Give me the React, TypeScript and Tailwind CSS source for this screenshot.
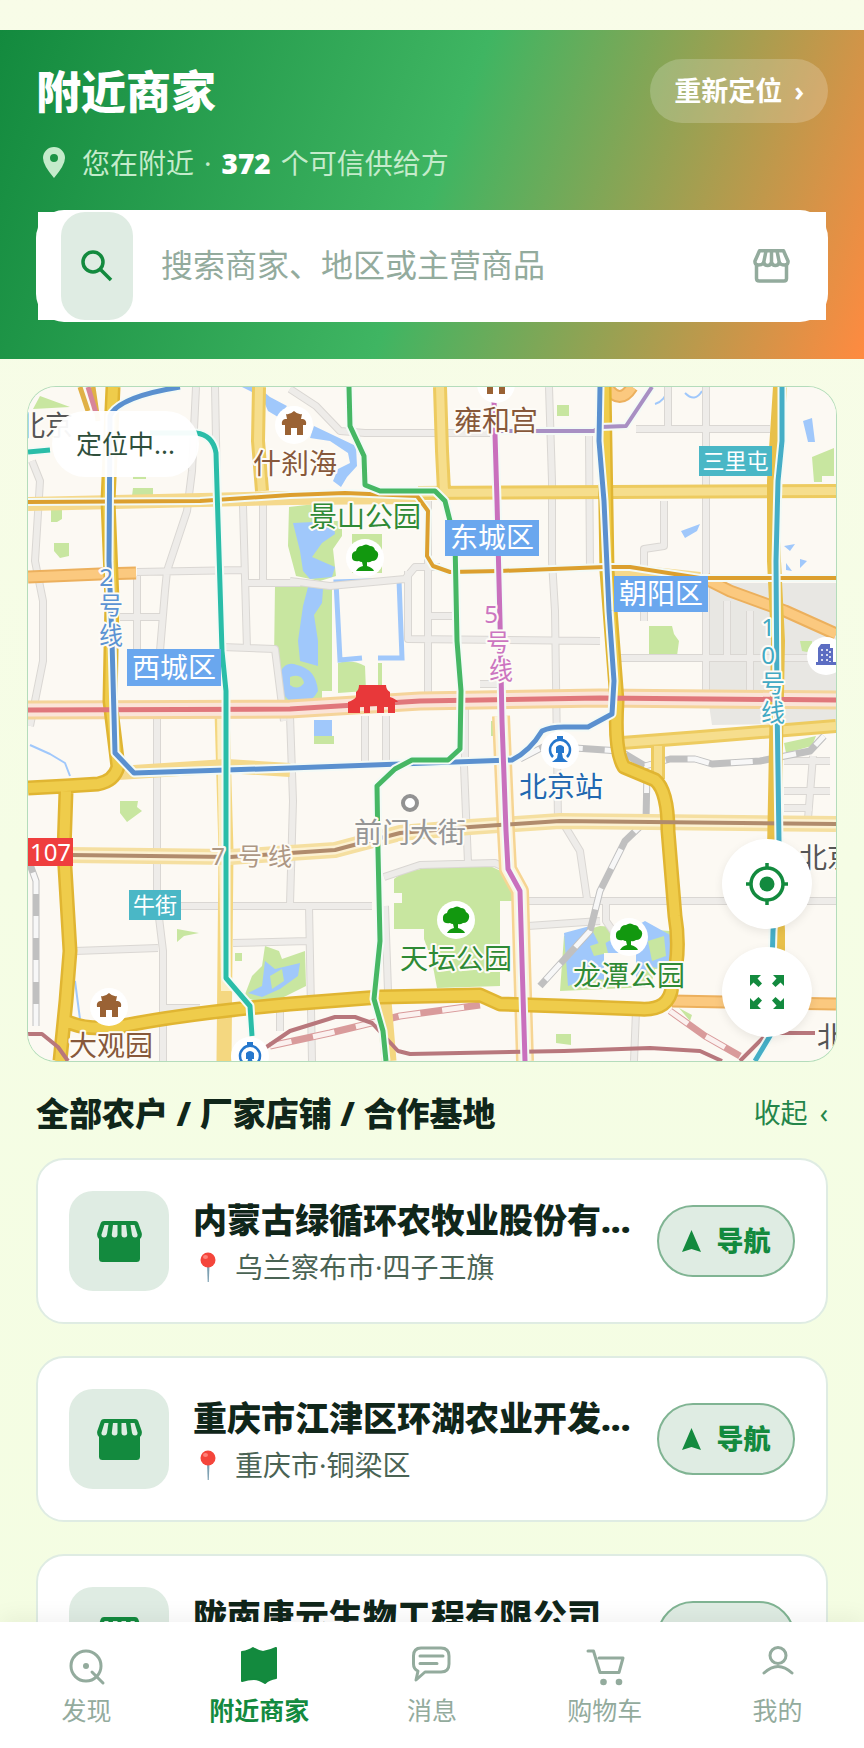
import React from 'react';

const shops = [
  { name: '内蒙古绿循环农牧业股份有...', area: '乌兰察布市·四子王旗' },
  { name: '重庆市江津区环湖农业开发...', area: '重庆市·铜梁区' },
  { name: '陇南唐元生物工程有限公司', area: '陇南市·武都区' },
];

const StoreOutline: React.FC = () => (
  <svg viewBox="0 0 37 34" className="h-[34px] w-[37px]" fill="none" stroke="#93ab9d" strokeWidth="3.500" strokeLinejoin="round" strokeLinecap="round" aria-hidden="true">
    <path d="M6.500 1.800H30.500L35 12Q35.500 16 31.500 16Q27.500 16 26.300 13.500Q25.500 16.500 22.300 16.500Q19.500 16.500 18.500 13.500Q17.500 16.500 14.700 16.500Q11.500 16.500 10.700 13.500Q9.500 16 5.500 16Q1.500 16 2 12Z" />
    <path d="M13 2L10.700 13.500M18.500 2V13.500M24 2L26.300 13.500M3.500 17V29.500Q3.500 32 6.300 32H31Q33.500 32 33.500 29.500V17" />
  </svg>
);

const StoreFilled: React.FC = () => (
  <svg viewBox="0 0 45 41" className="h-[41px] w-[45px]" aria-hidden="true">
    <path fill="#138a3e" d="M7 0H38Q40.5 0 41.2 2L44.7 12Q45.5 16 43 18V37.500Q43 41 39.500 41H5.500Q2 41 2 37.500V18Q-.5 16 .3 12L3.800 2Q4.500 0 7 0Z" />
    <g fill="#dfede3">
      <path d="M7.500 4H11.500L10 14Q9.500 16.500 7 16.500Q4 16.500 4.500 13.500Z" />
      <path d="M16 4H20.500V13.500Q20.500 16.500 17.700 16.500Q14.500 16.500 14.800 13.500Z" />
      <path d="M24.500 4H29L30.200 13.500Q30.500 16.500 27.300 16.500Q24.500 16.500 24.500 13.500Z" />
      <path d="M33.500 4H37.500L40.500 13.500Q41 16.500 38 16.500Q35.500 16.500 35 14Z" />
    </g>
  </svg>
);

const PushPin: React.FC = () => (
  <svg viewBox="0 0 30 32" className="h-8 w-[30px]" aria-hidden="true">
    <path d="M14 14H16.500L15.800 31H14.700Z" fill="#7ea1b3" />
    <circle cx="15" cy="9" r="7.500" fill="#f4453b" />
    <ellipse cx="12.500" cy="6" rx="2.500" ry="2" fill="#ff8279" />
  </svg>
);

// white disc with a small symbol, centred at x/y
const Poi: React.FC<{ x: number; y: number; kind: 'tree' | 'temple' | 'station' | 'office' }> = ({ x, y, kind }) => (
  <g transform={`translate(${x} ${y})`}>
    <circle r="19" fill="#fff" />
    {kind === 'tree' && (
      <path fill="#12980f" d="M-13 0Q-14-6-9-7Q-8-12-3-12Q1-15 5-12Q9-12 10-8Q14-6 13-2Q12 3 7 3Q4 5 2 4V8Q8 10 9 13H-9Q-7 9-2 8L-3 4Q-5 4-6 3Q-12 4-13 0Z" />
    )}
    {kind === 'temple' && (
      <path fill="#9a6234" d="M-8-11Q-4-10 0-14Q4-10 8-11L7-6H9Q13-5 12 0H9V10H3V3H-3V10H-9V0H-12Q-13-5-9-6H-7Z" />
    )}
    {kind === 'station' && (
      <g>
        <path d="M-7 7A10 10 0 1 1 7 7" fill="none" stroke="#2577cd" strokeWidth="2.500" />
        <path fill="#2577cd" d="M-3-14H3V-10H-3ZM-4-3Q0-7 4-3V3H2L3 8L8 12H-8L-3 8L-2 3H-4Z" />
      </g>
    )}
    {kind === 'office' && (
      <g>
        <path fill="#5c6dc2" d="M-5-12H4V-8H7V6H10V9H-10V6H-8V-8Z" />
        <path stroke="#fff" strokeWidth="1.500" strokeDasharray="2 3" d="M-4-7V6M1-7V6M4-5V6" />
      </g>
    )}
  </g>
);

const minorRoads = [
  'M196 386L192 470L187 510L167 570L165 590L160 650',
  'M137 571L243 569M137 575V655M120 616H165M215 386L217 490M243 505L247 648M263 500V580M248 582H300M222 646L275 648L284 720',
  'M32 460L40 480L35 560L43 600L43 660L35 700L30 725',
  'M290 388L316 405L340 430L365 432H490M549 386L552 480L552 560L555 610L558 820M589 435L590 570',
  'M408 570V638L600 640M428 500V700M290 580L330 585L405 578L415 566L440 566M430 615H455',
  'M706 386V690M668 386V428M636 428H770M664 500V545L644 548V620M615 657H836M727 600V660M750 610V690',
  'M157 715V900L163 950V1060M290 715L293 800L290 903M160 905H372M75 950L158 947M233 942L308 940M163 1007H200M280 1010V1030',
  'M309 905L312 1060M385 905L388 990M384 876L420 864L495 862L508 868M464 765L468 862',
  'M527 900H836M528 925L600 920M563 822L580 850L587 898M606 900V920L620 940M636 1010L634 1060',
  'M813 755L808 818M784 790H830M784 807H812M784 760H830M365 715V760M386 715V760M465 690V765M480 683H500',
];

const parks = [
  'M33 408L40 395L70 406Z',
  'M51 508H62V518L57 521H51ZM54 542H69V555L60 557L54 550ZM133 487H153V495H132ZM133 475H146V478H133Z',
  'M289 506L315 503L318 520H342V535L333 548L336 575L320 580L296 575L288 545Z',
  'M275 584H332V690H322V702H285L274 660ZM338 662Q352 658 365 665L366 690L338 692Z',
  'M352 533H382V572H352ZM378 662H382V692H378Z',
  'M649 625H672L674 633L679 640L677 655H649ZM812 456L834 447V475H822V481H814Z',
  'M800 640H812V652L802 650ZM120 800H138L137 806L142 810L127 821L120 812Z',
  'M177 928L199 932L184 935L177 941ZM235 952H242V960H235Z',
  'M244 996L252 975L262 965L265 945L279 950L282 958L305 950L306 985L280 998L256 1000Z',
  'M402 872L430 866L490 865L505 872L514 900H500V985L437 987L432 960L424 938V928H394V902H402V892H394V878Z',
  'M564 935L600 925L670 930L672 985L560 990ZM556 1033H571V1044L556 1042Z',
  'M784 742L816 735L812 745L786 752ZM491 720H498V735H491ZM314 735H334V743H314ZM679 1007L692 1014L690 1020Z',
  'M557 404H569V415H557Z',
];

const water = [
  'M242 386H258L270 396L287 405L278 416L268 410L262 396Z',
  'M314 425L356 445L357 465L347 476L341 486L333 480L338 468L350 462L348 452L330 440L310 437Z',
  'M293 522L333 520L335 533L322 542L312 556L335 566L332 576L310 578L303 570L300 550Z',
  'M308 586L323 588L322 602L314 614L318 640V665L300 660L298 640L303 605Z',
  'M281 670Q286 660 297 664Q316 668 318 690Q310 706 292 701Q278 694 281 670Z',
  'M803 420L812 417L815 441H808ZM681 530L700 523L697 530L685 537ZM784 545L795 543L790 550ZM800 558L807 560L800 567ZM786 562L792 570L786 569Z',
  'M248 992L262 985L265 960L275 968L300 962L298 975L280 988L262 996Z',
  'M564 932L590 925L600 945L645 920L672 935L670 970L648 965L640 980L590 978L568 985Z',
  'M314 719H332V735H314Z',
];

const ring =
  'M28 787L66 785L98 783Q114 780 118 766L110 700L112 600L108 500L113 386M66 790L64 850L70 950L66 1000L60 1060M62 1018Q82 1030 118 1026Q180 1013 290 1003L380 996L480 994L500 1003L560 1005L640 1008Q670 1010 672 985Q681 950 675 915L668 830Q668 790 655 779L624 766Q614 750 617 700L607 570L604 386';

const railway =
  'M36 1025V880L28 858M520 758L545 745L620 750L645 765L670 758H695L712 763L760 760L810 750L824 735M647 770L646 820L625 840L600 890L590 930L540 985';
const lineTwo =
  'M180 386Q118 396 110 415L109 560L112 640L115 752L134 772L290 767L512 759Q530 750 542 730Q550 726 564 726H588L612 713L614 680L609 610L604 500L599 440L600 386';
const lineFive = 'M494 400L497 500L500 620L502 720L506 830L508 868L520 890L522 960L525 1060';
const lineTen = 'M782 386V440L778 480L776 560L777 700L779 840L773 930L770 1035L755 1060';
const lineSix = 'M28 501L200 500L290 494L345 492L417 495L428 510L427 555L433 565L450 571L500 570L605 566H630L700 577H836';
const lineSeven = 'M70 854L230 856L290 852L335 849L350 845L400 832L470 826L560 820L836 823';
const redLine = 'M28 709L290 708L420 700L600 697L836 699';
const tealLine = 'M28 451L50 449M150 432H196Q213 434 216 452L218 520L222 650L226 690V977L250 1005L252 1035';
const greenLine =
  'M349 386L350 425L364 455L365 484L380 490H435L445 500L455 540L457 640L461 690L460 748L448 759H412L395 768L377 785L378 850L380 940L374 998L383 1030L386 1060';

// metro line with its pale casing
const Metro: React.FC<{ d: string; color: string; width?: number }> = ({ d, color, width = 5 }) => (
  <>
    <path d={d} stroke="#f3faf6" strokeWidth={width + 4} />
    <path d={d} stroke={color} strokeWidth={width} />
  </>
);

const districts = [
  { text: '西城区', x: 127, y: 648, w: 94, h: 37, fill: '#6aa7ee', size: 28 },
  { text: '东城区', x: 445, y: 519, w: 94, h: 36, fill: '#6aa7ee', size: 28 },
  { text: '朝阳区', x: 614, y: 575, w: 94, h: 36, fill: '#6aa7ee', size: 28 },
  { text: '三里屯', x: 699, y: 445, w: 73, h: 30, fill: '#4ab7c6', size: 22 },
  { text: '牛街', x: 129, y: 889, w: 52, h: 30, fill: '#4ab7c6', size: 22 },
  { text: '107', x: 28, y: 837, w: 45, h: 28, fill: '#ef3e3e', size: 24 },
];

const places = [
  { text: '什刹海', x: 295, y: 473, fill: '#87583a' },
  { text: '雍和宫', x: 496, y: 430, fill: '#87583a' },
  { text: '大观园', x: 111, y: 1055, fill: '#87583a' },
  { text: '景山公园', x: 365, y: 526, fill: '#2f8a35' },
  { text: '天坛公园', x: 456, y: 968, fill: '#2f8a35' },
  { text: '龙潭公园', x: 629, y: 985, fill: '#2f8a35' },
  { text: '前门大街', x: 410, y: 842, fill: '#969696' },
  { text: '北京站', x: 561, y: 796, fill: '#2268b0' },
  { text: '北京', x: 827, y: 867, fill: '#555555' },
  { text: '北京', x: 45, y: 435, fill: '#555555' },
  { text: '北', x: 831, y: 1046, fill: '#555555' },
];

const lineNames = [
  { chars: ['2', '号', '线'], pos: [[106, 585], [111, 613], [111, 643]], fill: '#5b93d3' },
  { chars: ['5', '号', '线'], pos: [[491, 622], [498, 650], [501, 678]], fill: '#cc75c0' },
  { chars: ['1', '0', '号', '线'], pos: [[768, 635], [768, 663], [773, 691], [773, 720]], fill: '#41a9c4' },
  { chars: ['7', '号', '线'], pos: [[218, 864], [250, 864], [280, 864]], fill: '#ad9784' },
];

const CityMap: React.FC = () => (
  <svg viewBox="28 386 808 674" className="block h-auto w-full" role="img" aria-label="附近商家地图">
    <rect x="28" y="386" width="808" height="674" fill="#fcf9f3" />
    <path d="M707 582L836 582V722L712 724L707 690Z" fill="#e8e7e3" />
    <path d={parks.join('')} fill="#c8e6a0" />
    <path d={water.join('')} fill="#a0c8fb" />
    <path d="M290 676Q302 672 304 682Q298 690 290 684ZM270 975L282 968L284 980L272 988ZM590 945L605 940L608 952L594 955ZM648 940L664 935L666 955L652 960Z" fill="#c8e6a0" />
    <path d="M604 952H636V985H604ZM655 968H672V988H650Z" fill="#fcf9f3" />
    <g fill="none" strokeLinejoin="round">
      <path d="M362 657L340 659L336 581L399 579L402 657H378" stroke="#a0c8fb" strokeWidth="5" strokeLinejoin="miter" />
      <path d="M30 744L50 753L65 762L70 775M655 403Q665 400 668 388M685 392Q695 402 702 390M75 980L80 1018" stroke="#a0c8fb" strokeWidth="2" />
      <path d={minorRoads.join('')} stroke="#dad7d3" strokeWidth="8" />
      <path d={minorRoads.join('')} stroke="#eeece9" strokeWidth="6" />

      <path d={railway} stroke="#c0c0c0" strokeWidth="7" />
      <path d={railway} stroke="#f7f7f7" strokeWidth="5" strokeDasharray="22 22" />
      <path d="M270 1045L330 1032L400 1015L480 1004M670 1010L705 1035L740 1055" stroke="#d99b9b" strokeWidth="7" />
      <path d="M270 1045L330 1032L400 1015L480 1004M670 1010L705 1035L740 1055" stroke="#fbf1ef" strokeWidth="5" strokeDasharray="22 22" />

      <path d="M222 710L226 850L224 1060M384 1000L389 1060" stroke="#f4d780" strokeWidth="15" />
      <path d="M222 710L226 990" stroke="#fbf0c8" strokeWidth="10" />
      <path d="M28 576L100 573L136 572M836 1003L672 1000M706 578L730 590L785 610L836 633M607 386Q620 405 632 386" stroke="#ecb05d" strokeWidth="13" />
      <path d="M28 576L100 573L136 572M836 1003L672 1000M706 578L730 590L785 610L836 633M607 386Q620 405 632 386" stroke="#fbc97f" strokeWidth="9" />
      <path d="M259 386L258 440L262 490M440 386L442 450L444 490M418 492L836 490M622 742L700 736L836 725M658 745V778" stroke="#edcb60" strokeWidth="14" />
      <path d="M259 386L258 440L262 490M440 386L442 450L444 490M418 492L836 490M622 742L700 736L836 725M658 745V778" stroke="#f6de8d" strokeWidth="8" />
      <path d="M28 503L290 497L420 496M118 772L226 765L290 769M605 568L700 578" stroke="#f5d98c" strokeWidth="14" />
      <path d={lineSeven} stroke="#f5dfa0" strokeWidth="16" />
      <path d={lineSeven} stroke="#fcf1d2" strokeWidth="9" />
      <path d="M501 715L506 830L508 868L520 890L522 960L525 1060" stroke="#f6d593" strokeWidth="18" />
      <path d="M501 715L506 830L508 868L520 890L522 960L525 1060" stroke="#fdf3dc" strokeWidth="13" />
      <path d={redLine} stroke="#f5d49a" strokeWidth="19" />
      <path d={redLine} stroke="#fbe4d8" strokeWidth="13" />
      <path d="M780 386L774 480L774 560L778 640L774 850L778 930V960" stroke="#e8c04a" strokeWidth="14" />
      <path d={ring} stroke="#e0b532" strokeWidth="15" />
      <path d={ring} stroke="#efcc4b" strokeWidth="10" />
      <path d="M80 386L88 410M93 386L98 420" stroke="#e0b045" strokeWidth="5" />
      <path d="M88 386L96 412" stroke="#d7849a" strokeWidth="5" />

      <path d="M28 1033H42L58 1046L68 1060M265 1047L290 1030L335 1016H355L372 1022L398 1050L410 1053L564 1050L650 1047L700 1050L722 1060M740 1060L765 1035L777 1032H815" stroke="#b8777c" strokeWidth="4" />
      <path d={redLine} stroke="#e0777b" strokeWidth="5" />
      <path d={lineSeven} stroke="#b08b6c" strokeWidth="4" />
      <Metro d={lineSix} color="#dc9f2e" width={4} />
      <Metro d="M490 430H594L600 426L626 425L652 386" color="#a88fc3" width={4} />
      <Metro d={lineTwo} color="#5a90cf" />
      <Metro d={lineTen} color="#45aec6" />
      <Metro d={lineFive} color="#c970bd" />
      <Metro d={greenLine} color="#46b764" />
      <Metro d={tealLine} color="#2abda8" />
      <circle cx="410" cy="802" r="7" fill="#fff" stroke="#929292" strokeWidth="4" />
    </g>

    <path fill="#e8383a" d="M356 691Q359 689 359 684H386Q386 689 390 691V696Q396 698 398 701H395V712H388V706H384V712H377V705H370V712H364V706H360V712H348V701Q354 699 356 696Z" />

    <Poi x={294} y={424} kind="temple" />
    <Poi x={496} y={383} kind="temple" />
    <Poi x={109} y={1006} kind="temple" />
    <Poi x={365} y={557} kind="tree" />
    <Poi x={456} y={919} kind="tree" />
    <Poi x={629} y={936} kind="tree" />
    <Poi x={560} y={749} kind="station" />
    <Poi x={250} y={1055} kind="station" />
    <Poi x={826} y={655} kind="office" />

    <g textAnchor="middle">
      {places.map((p) => (
        <text key={`${p.text}-${p.x}`} x={p.x} y={p.y} fill={p.fill} fontSize="28" stroke="#fdfbf6" strokeWidth="4" strokeLinejoin="round" paintOrder="stroke">
          {p.text}
        </text>
      ))}
      {lineNames.map((line) =>
        line.chars.map((c, i) => (
          <text key={`${line.fill}-${i}`} x={line.pos[i][0]} y={line.pos[i][1]} fill={line.fill} fontSize="24" stroke="#fdfbf6" strokeWidth="4" strokeLinejoin="round" paintOrder="stroke">
            {c}
          </text>
        )),
      )}
      {districts.map((d) => (
        <g key={d.text}>
          <rect x={d.x} y={d.y} width={d.w} height={d.h} fill={d.fill} />
          <text x={d.x + d.w / 2} y={d.y + d.h / 2 + d.size * 0.36} fill="#fff" fontSize={d.size}>
            {d.text}
          </text>
        </g>
      ))}
    </g>
  </svg>
);

const tabs = [
  {
    label: '发现',
    icon: (
      <>
        <circle cx="20" cy="22" r="15" />
        <path d="M26 28L37 39" />
        <circle cx="20" cy="22" r="3" fill="currentColor" stroke="none" />
      </>
    ),
  },
  {
    label: '附近商家',
    active: true,
    icon: <path d="M3 8Q10 7 14 4Q19 7 24 8Q31 7 37 4V34Q30 35 26 39Q20 35 15 35Q9 35 3 37Z" fill="currentColor" strokeWidth="2" />,
  },
  {
    label: '消息',
    icon: (
      <>
        <path d="M9 4H29Q37 4 37 12V20Q37 28 29 28H13L4 36L6 27Q1.500 25 1.500 20V12Q1.500 4 9 4Z" />
        <path d="M8 12H31M8 19.500H25" />
      </>
    ),
  },
  {
    label: '购物车',
    icon: (
      <>
        <path d="M3 7H8.500L15 28.500H34L38 14H14" />
        <circle cx="18.500" cy="38" r="3.300" fill="currentColor" stroke="none" />
        <circle cx="34" cy="38" r="3.300" fill="currentColor" stroke="none" />
      </>
    ),
  },
  {
    label: '我的',
    icon: (
      <>
        <circle cx="20" cy="11.500" r="8" />
        <path d="M6 29Q20 16 34 29" />
      </>
    ),
  },
];

const App: React.FC = () => {
  return (
    <div className="flex h-screen flex-col bg-gradient-to-b from-[#f8fce8] via-[#f5fde5] to-[#f4fde2] font-['Noto_Sans','Noto_Sans_CJK_SC',sans-serif] text-[#10261a]">
      <main className="min-h-0 flex-1 overflow-y-auto pt-[30px] [scrollbar-width:none]">
        <header className="bg-[linear-gradient(110deg,#138a3e_0%,#3fb562_50%,#ff8a40_100%)] px-9 pt-[29px] pb-[37px] text-white">
          <div className="flex h-16 items-center justify-between">
            <h1 className="text-[45px] leading-none font-black">附近商家</h1>
            <button type="button" className="flex h-16 items-center gap-3 rounded-full bg-white/20 px-6 text-[27px] font-bold">
              重新定位 <span>›</span>
            </button>
          </div>
          <p className="mt-5 flex h-10 items-center gap-[10px] text-[28px] text-[#c4ebcb]">
            <svg viewBox="0 0 36 40" className="h-10 w-9" fill="currentColor" aria-hidden="true">
              <path fillRule="evenodd" d="M18 4A11 11 0 0 1 29 15Q29 22 18 35Q7 22 7 15A11 11 0 0 1 18 4ZM18 11A4 4 0 1 0 18 19A4 4 0 1 0 18 11Z" />
            </svg>
            <span>您在附近</span>
            <span>·</span>
            <strong className="font-black text-white">372</strong>
            <span>个可信供给方</span>
          </p>
          <form className="mt-[27px] h-28 rounded-[28px] bg-white p-[2px]">
            <div className="flex h-full items-center bg-white pr-9 pl-[23px]">
              <button type="submit" aria-label="搜索" className="flex h-full w-[72px] shrink-0 items-center justify-center rounded-[24px] bg-[#dfece3]">
                <svg viewBox="0 0 32 32" className="h-8 w-8" fill="none" stroke="#138a3e" strokeWidth="3.500" aria-hidden="true">
                  <circle cx="12" cy="12" r="10" />
                  <path d="M19 19L30 30" />
                </svg>
              </button>
              <input
                type="text"
                aria-label="搜索商家"
                placeholder="搜索商家、地区或主营商品"
                className="ml-7 h-16 min-w-0 flex-1 bg-transparent pb-1 text-[32px] text-[#10261a] outline-none placeholder:text-[#93ab9d]"
              />
              <StoreOutline />
            </div>
          </form>
        </header>

        <section className="relative mx-7 mt-7 overflow-hidden rounded-[28px] ring-1 ring-[#b4dcbb]">
          <CityMap />
          <div className="absolute top-6 left-6 flex h-[66px] items-center rounded-full bg-white/95 px-6 text-[26px] text-[#2f4f3c]">定位中...</div>
          <div className="absolute right-6 bottom-6 flex flex-col gap-[18px]">
            <button type="button" aria-label="定位" className="flex h-[90px] w-[90px] items-center justify-center rounded-full bg-white shadow-[0_3px_10px_rgba(0,0,0,0.08)]">
              <svg viewBox="0 0 42 42" className="h-[42px] w-[42px]" fill="none" stroke="#138a3e" strokeWidth="3.500" aria-hidden="true">
                <circle cx="21" cy="21" r="16" />
                <circle cx="21" cy="21" r="7.500" fill="#138a3e" stroke="none" />
                <path d="M21 0V6M21 36V42M0 21H6M36 21H42" />
              </svg>
            </button>
            <button type="button" aria-label="全屏" className="flex h-[90px] w-[90px] items-center justify-center rounded-full bg-white shadow-[0_3px_10px_rgba(0,0,0,0.08)]">
              <svg viewBox="0 0 34 34" className="h-[34px] w-[34px]" fill="#138a3e" aria-hidden="true">
                <path d="M0 0H11L7.500 3.500L12 8.500L8.500 12L3.500 7.500L0 11Z" />
                <path d="M34 0H23L26.500 3.500L22 8.500L25.500 12L30.500 7.500L34 11Z" />
                <path d="M0 34H11L7.500 30.500L12 25.500L8.500 22L3.500 26.500L0 23Z" />
                <path d="M34 34H23L26.500 30.500L22 25.500L25.500 22L30.500 26.500L34 23Z" />
              </svg>
            </button>
          </div>
        </section>

        <div className="mx-9 mt-7 flex h-12 items-center justify-between">
          <h2 className="text-[33px] leading-none font-black">全部农户 / 厂家店铺 / 合作基地</h2>
          <button type="button" className="flex items-center gap-3 text-[27px] text-[#24854a]">
            收起 <span>‹</span>
          </button>
        </div>

        <ul className="mx-9 mt-[21px] flex flex-col gap-8 pb-8">
          {shops.map((shop) => (
            <li key={shop.name} className="flex items-center rounded-[28px] border-2 border-[#dfece3] bg-white p-[31px]">
              <div className="flex h-[100px] w-[100px] shrink-0 items-center justify-center rounded-[24px] bg-[#dfece3]">
                <StoreFilled />
              </div>
              <div className="ml-6 min-w-0 flex-1">
                <h3 className="truncate text-[34px] leading-[52px] font-black">{shop.name}</h3>
                <p className="flex items-center gap-3 text-[28px] leading-[42px] text-[#4a6354]">
                  <PushPin />
                  {shop.area}
                </p>
              </div>
              <button type="button" className="ml-5 flex h-[72px] w-[138px] shrink-0 items-center justify-center gap-4 rounded-full border-2 border-[#80b493] bg-[#dfece3] text-[27px] font-black text-[#138a3e]">
                <svg viewBox="0 0 19 23" className="h-[23px] w-[19px]" fill="currentColor" aria-hidden="true">
                  <path d="M9.500 0L19 22L9.500 19L0 22Z" />
                </svg>
                导航
              </button>
            </li>
          ))}
        </ul>
      </main>

      <nav className="relative grid shrink-0 grid-cols-5 bg-white pt-[22px] pb-[22px] shadow-[0_-6px_20px_rgba(0,0,0,0.05)]">
        {tabs.map((tab) => (
          <a
            key={tab.label}
            href="#"
            className={`flex flex-col items-center gap-[10px] text-[25px] leading-8 ${tab.active ? 'font-bold text-[#138a3e]' : 'text-[#93ab9d]'}`}
          >
            <svg viewBox="0 0 40 40" className="h-10 w-10 overflow-visible" fill="none" stroke="currentColor" strokeWidth="3" strokeLinecap="round" strokeLinejoin="round" aria-hidden="true">
              {tab.icon}
            </svg>
            {tab.label}
          </a>
        ))}
      </nav>
    </div>
  );
};

export default App;
